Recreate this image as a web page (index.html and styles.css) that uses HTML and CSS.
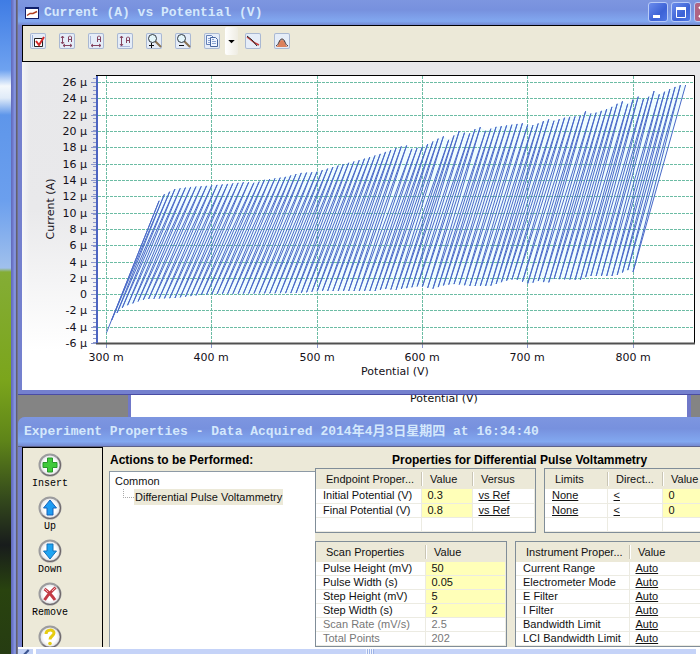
FILE: index.html
```html
<!DOCTYPE html>
<html lang="en">
<head>
<meta charset="utf-8">
<title>Current (A) vs Potential (V)</title>
<link rel="stylesheet" href="styles.css">
</head>
<body>
<div class="desktop">
<main class="workspace">
  <section class="window chart-window">
    <header class="titlebar">
      <svg class="title-icon" viewBox="0 0 14 12"><rect x=".5" y=".5" width="13" height="11" fill="#fff" stroke="#10206c"/><path d="M0 1h14" stroke="#10206c" stroke-width="2"/><path d="M2 8.500l3-2h3l4-2" fill="none" stroke="#b04020" stroke-width="1.500"/></svg>
      <h1>Current (A) vs Potential (V)</h1>
      <div class="caption-buttons">
        <button aria-label="Minimize"><svg viewBox="0 0 20 20"><path d="M5 14.500h7" stroke="#fff" stroke-width="3"/></svg></button>
        <button aria-label="Maximize"><svg viewBox="0 0 20 20"><path d="M5.500 6v9.500h9V6" fill="none" stroke="#fff"/><path d="M5 6.500h10" stroke="#fff" stroke-width="3"/></svg></button>
        <button class="close" aria-label="Close"><svg viewBox="0 0 20 20"><path d="M5 5l9 10M14 5l-9 10" stroke="#fff" stroke-width="2"/></svg></button>
      </div>
    </header>
    <div class="toolbar">
      <button aria-label="Options"><svg viewBox="0 0 16 16"><path d="M2.500 2v12" stroke="#9fb4dc"/><path d="M4.500 5.500h8v8h-8z" fill="#fff" stroke="#222"/><path d="M6 8l3 4 5-8" fill="none" stroke="#d42a2a" stroke-width="2"/></svg></button>
      <button aria-label="Autoscale both axes"><svg viewBox="0 0 16 16"><path d="M3.500 3v7M2 5l1.500-2L5 5M2 9l1.500 2L5 9M4 12.500h9M6 11l-2 1.500L6 14M11 11l2 1.500-2 1.500M9.500 9V4l1-1h1l1 1v5M9.500 6.500h3" fill="none" stroke="#85445f"/></svg></button>
      <button aria-label="Autoscale X axis"><svg viewBox="0 0 16 16"><path d="M2.500 3v8" stroke="#a9b6d8"/><path d="M3 12.500h10M5 11l-2 1.500L5 14M11 11l2 1.500-2 1.500M9.500 9V4l1-1h1l1 1v5M9.500 6.500h3" fill="none" stroke="#85445f"/></svg></button>
      <button aria-label="Autoscale Y axis"><svg viewBox="0 0 16 16"><path d="M3 13.500h10" stroke="#a9b6d8"/><path d="M4.500 3v10M3 5l1.500-2L6 5M3 11l1.500 2L6 11M9.500 10V5l1-1h1l1 1v5M9.500 7.500h3" fill="none" stroke="#85445f"/></svg></button>
      <button aria-label="Zoom in"><svg viewBox="0 0 16 16"><path d="M9 8l6 6" stroke="#8a7252" stroke-width="2"/><circle cx="6.500" cy="5.500" r="4" fill="#e4f6fa" stroke="#303840"/><path d="M3 12.500h5M5.500 10v5" stroke="#111"/></svg></button>
      <button aria-label="Zoom out"><svg viewBox="0 0 16 16"><path d="M9 8l6 6" stroke="#8a7252" stroke-width="2"/><circle cx="6.500" cy="5.500" r="4" fill="#e4f6fa" stroke="#303840"/><path d="M4 12.500h5" stroke="#111"/></svg></button>
      <div class="split">
        <button aria-label="Copy"><svg viewBox="0 0 16 16"><path d="M2.500 2.500h5l2 2v7h-7z" fill="#eef4ff" stroke="#6581b5"/><path d="M6.500 4.500h5l2 2v7h-7z" fill="#eef4ff" stroke="#46659f"/><path d="M8 8.500h4M8 10.500h4M8 6.500h2M4 5.500h2M4 7.500h2M4 9.500h2" stroke="#8aa4d2"/></svg></button>
        <button class="drop" aria-label="Copy options"><svg viewBox="0 0 12 28"><path d="M3 12h6l-3 3z" fill="#000"/></svg></button>
      </div>
      <button aria-label="Fit line"><svg viewBox="0 0 16 16"><path d="M2 4l4 3 4 3 4 2" fill="none" stroke="#d04040" stroke-width="1.500"/><path d="M2 3l5 4 5 6" fill="none" stroke="#222"/></svg></button>
      <button aria-label="Find peak"><svg viewBox="0 0 16 16"><path d="M2 14c3-1 3-7 6-7s3 6 6 7z" fill="#dc815c"/><path d="M2 13c3-1 3-7 6-7s3 6 6 7" fill="none" stroke="#3a2420"/></svg></button>
    </div>
    <div class="chart">
      <svg id="plot" viewBox="22 62 678 328" role="img" aria-label="Current against potential">
        <rect x="96" y="75" width="598" height="269" fill="#fff"/>
        <polygon id="band" fill="#effdff"/>
        <g id="grid"></g>
        <polyline id="trace" fill="none" stroke="#4a69c8"/>
        <g id="ticks"></g>
        <path d="M96 75.500h598.500v268" fill="none" stroke="#000"/>
        <path d="M96 343.500h599" stroke="#505050" stroke-width="2"/>
        <path d="M97 76v267" stroke="#4c64c0" stroke-width="2"/>
        <g id="labels"></g>
        <text x="395" y="375" text-anchor="middle">Potential (V)</text>
        <text transform="translate(54 209) rotate(-90)" text-anchor="middle">Current (A)</text>
      </svg>
    </div>
  </section>

  <div class="behind"><div class="behind-window"><span>Potential (V)</span></div></div>

  <section class="window props-window">
    <header class="titlebar">
      <h2>Experiment Properties - Data Acquired 2014年4月3日星期四 at 16:34:40</h2>
    </header>
    <div class="props-body">
      <nav class="actions">
        <button><svg viewBox="0 0 24 24"><use href="#disc"/><path d="M9.500 5h5v4.500H19v5h-4.500V19h-5v-4.500H5v-5h4.500z" fill="#3fca3a" stroke="#27962a"/></svg>Insert</button>
        <button><svg viewBox="0 0 24 24"><use href="#disc"/><path d="M12 4l6.500 8H15v7H9v-7H5.500z" fill="#1f9cf2" stroke="#1560b8"/></svg>Up</button>
        <button><svg viewBox="0 0 24 24"><use href="#disc"/><path d="M12 20l6.500-8H15V5H9v7H5.500z" fill="#1fa4f2" stroke="#1570b8"/></svg>Down</button>
        <button><svg viewBox="0 0 24 24"><use href="#disc"/><path d="M6.500 7c3 2 7 6 10.500 11M17.500 5.500C14 9 10 12 6.500 18" fill="none" stroke="#c33b45" stroke-width="3"/><path d="M7 7l3 3M17 6l-3 3" stroke="#efb0b0"/></svg>Remove</button>
        <button aria-label="Help"><svg viewBox="0 0 24 24"><use href="#disc"/><path d="M8 9c0-5 8-5 8-1 0 3-4 3-4 6.500" fill="none" stroke="#e6cc12" stroke-width="3"/><circle cx="12" cy="18.500" r="1.800" fill="#e6cc12"/></svg></button>
      </nav>
      <div class="steps">
        <h3>Actions to be Performed:</h3>
        <ul class="tree">
          <li>Common
            <ul><li><span>Differential Pulse Voltammetry</span></li></ul>
          </li>
        </ul>
      </div>
      <div class="details">
        <h3>Properties for Differential Pulse Voltammetry</h3>
        <div class="row">
          <div class="box endpoint"><table>
            <thead><tr><th>Endpoint Proper...</th><th>Value</th><th>Versus</th></tr></thead>
            <tbody>
              <tr><td>Initial Potential (V)</td><td class="edit">0.3</td><td><a href="#">vs Ref</a></td></tr>
              <tr><td>Final Potential (V)</td><td class="edit">0.8</td><td><a href="#">vs Ref</a></td></tr>
              <tr><td></td><td></td><td></td></tr>
            </tbody></table></div>
          <div class="box limits"><table>
            <thead><tr><th>Limits</th><th>Direct...</th><th>Value</th></tr></thead>
            <tbody>
              <tr><td><a href="#">None</a></td><td><a href="#">&lt;</a></td><td class="edit">0</td></tr>
              <tr><td><a href="#">None</a></td><td><a href="#">&lt;</a></td><td class="edit">0</td></tr>
              <tr><td></td><td></td><td></td></tr>
            </tbody></table></div>
        </div>
        <div class="row">
          <div class="box scan"><table>
            <thead><tr><th>Scan Properties</th><th>Value</th></tr></thead>
            <tbody>
              <tr><td>Pulse Height (mV)</td><td class="edit">50</td></tr>
              <tr><td>Pulse Width (s)</td><td class="edit">0.05</td></tr>
              <tr><td>Step Height (mV)</td><td class="edit">5</td></tr>
              <tr><td>Step Width (s)</td><td class="edit">2</td></tr>
              <tr class="muted"><td>Scan Rate (mV/s)</td><td>2.5</td></tr>
              <tr class="muted"><td>Total Points</td><td>202</td></tr>
            </tbody></table></div>
          <div class="box instrument"><table>
            <thead><tr><th>Instrument Proper...</th><th>Value</th></tr></thead>
            <tbody>
              <tr><td>Current Range</td><td><a href="#">Auto</a></td></tr>
              <tr><td>Electrometer Mode</td><td><a href="#">Auto</a></td></tr>
              <tr><td>E Filter</td><td><a href="#">Auto</a></td></tr>
              <tr><td>I Filter</td><td><a href="#">Auto</a></td></tr>
              <tr><td>Bandwidth Limit</td><td><a href="#">Auto</a></td></tr>
              <tr><td>LCI Bandwidth Limit</td><td><a href="#">Auto</a></td></tr>
            </tbody></table></div>
        </div>
      </div>
    </div>
  </section>
  <div class="scrollbar">
    <button aria-label="Scroll left"><svg viewBox="0 0 14 6"><path d="M10 1L5 6" stroke="#3d5590" stroke-width="2"/></svg></button>
    <div class="thumb"></div>
  </div>
</main>
</div>
<svg width="0" height="0" class="defs"><defs>
  <radialGradient id="shine"><stop offset=".6" stop-color="#fff"/><stop offset="1" stop-color="#dcdce0"/></radialGradient>
  <g id="disc"><circle cx="12" cy="12" r="10.500" fill="url(#shine)" stroke="#9c9c9e" stroke-width="2"/><path d="M19.500 4.500a10.500 10.500 0 0 1-15 15" fill="none" stroke="#6c6568"/></g>
</defs></svg>
<script src="plot.js"></script>
</body>
</html>
```
FILE: plot.js
```js
// Differential pulse trace: each step runs from the base level up to the pulse level.
const base = [[106,334],[111,321],[117,313],[122,308],[128,305],[134,303],[142,300],[148,299],[175,298],[200,295],[215,294],[300,293],[320,291],[375,291],[385,289],[395,290],[420,286],[432,289],[445,285],[455,284],[470,286],[490,286],[505,281],[515,279],[523,282],[529,284],[538,281],[548,283],[553,279],[580,280],[588,276],[615,276],[628,270],[633,272]];
const pulse = [[159,201],[163,195],[169,192],[175,189],[190,187],[205,186],[227,184],[246,182],[256,183],[263,180],[285,177],[300,173],[316,172],[340,165],[360,160],[380,154],[396,148],[406,145],[411,149],[422,147],[432,142],[443,136],[449,140],[459,131],[469,134],[479,126],[485,131],[495,127],[524,123],[530,126],[537,124],[548,119],[553,121],[567,117],[580,116],[585,111],[592,114],[610,108],[622,101],[628,104],[637,96],[643,99],[648,98],[653,90],[658,95],[670,89],[680,85],[686,85]];
const NS = "http://www.w3.org/2000/svg";
const $ = id => document.getElementById(id);

function level(points, x) {
  for (let i = 1; i < points.length; i++) {
    const [x0, y0] = points[i - 1], [x1, y1] = points[i];
    if (x <= x1) return y0 + (y1 - y0) * (x - x0) / (x1 - x0);
  }
  return points[points.length - 1][1];
}
function add(parent, tag, attrs, text) {
  const el = document.createElementNS(NS, tag);
  for (const k in attrs) el.setAttribute(k, attrs[k]);
  if (text) el.textContent = text;
  parent.append(el);
}

const perMilli = 1.053, trace = [], top_ = [], bottom = [];
for (let i = 0; i <= 100; i++) {
  const x0 = 106.5 + i * 5 * perMilli, x1 = x0 + 50 * perMilli;
  const lo = [x0, level(base, x0)], hi = [x1, level(pulse, x1)];
  trace.push(lo, hi);
  top_.push(hi);
  bottom.unshift(lo);
}
$("trace").setAttribute("points", trace.join(" "));
$("band").setAttribute("points", top_.concat(bottom).join(" "));

for (let v = 26; v >= -6; v -= 2) {
  const y = Math.round(82 + (26 - v) * 8.16);
  if (v > -6) add($("grid"), "path", { d: `M98 ${y + .5}H694` });
  add($("ticks"), "path", { d: `M91 ${y + .5}h5` });
  add($("labels"), "text", { x: 87, y: y + 4, "text-anchor": "end" }, v === 0 ? "0" : v + " µ");
}
for (let y = 78; y < 343; y += 4) add($("ticks"), "path", { d: `M93 ${y + .5}h3` });
for (let m = 300; m <= 800; m += 100) {
  const x = Math.round(106 + (m - 300) * perMilli);
  add($("grid"), "path", { d: `M${x + .5} 76V343` });
  add($("ticks"), "path", { d: `M${x + .5} 344v4` });
  add($("labels"), "text", { x, y: 361, "text-anchor": "middle" }, m + " m");
}
```
FILE: styles.css
```css
* { box-sizing: border-box; }
body { margin: 0; font: 11px/14px "Liberation Sans", Arial, sans-serif; color: #111; }
h1, h2, h3, ul { margin: 0; padding: 0; font-size: inherit; list-style: none; }
button { margin: 0; padding: 0; border: 0; background: none; color: inherit; font: inherit; }
svg { display: block; }
.defs { position: absolute; }

.desktop {
  height: 100vh;
  overflow: hidden;
  padding-left: 11px;
  background: linear-gradient(#3f7ce4 0, #6ea2f0 70px, #f4f8fc 86px, #e0ebf8 98px, #5e96ea 115px, #6b9fee 200px, #a0c0ec 268px, #84ad35 272px, #7ba51c 380px, #5f8519 440px, #33481c 500px, #181c1c 545px, #29430f 590px, #263c12 100%);
}
.workspace {
  display: flex;
  flex-direction: column;
  height: 100%;
  padding-left: 7px;
  background: linear-gradient(90deg, #6168b8 0, #6f7bcc 2px, #8a9ae4 4px, #7580cc 5px, #606070 5px, #606070 6px, #8587a8 7px, #848484 7px);
}
.window { overflow: hidden; background: #7480ce; padding-left: 4px; }
.titlebar {
  display: flex;
  align-items: center;
  gap: 5px;
  height: 25px;
  margin-left: -4px;
  padding-left: 7px;
  background: linear-gradient(#7d96e0, #7791de 40%, #82a8f0 85%, #7488d0);
  color: #d4e8fc;
  font: bold 13px/16px "Liberation Mono", "Noto Sans CJK SC", monospace;
  white-space: nowrap;
}
.title-icon { width: 14px; height: 12px; }
.caption-buttons { display: flex; gap: 3px; margin: 0 -14px 2px auto; }
.caption-buttons button { width: 20px; height: 20px; border: 1px solid #b8cbf8; border-radius: 3px; background: linear-gradient(135deg, #6b8cec, #3c62d6 60%, #4f78e6); }
.caption-buttons .close { background: #b06484; }
.caption-buttons svg { margin: -1px; width: 20px; height: 20px; }

.toolbar {
  display: flex;
  align-items: center;
  gap: 13px;
  height: 37px;
  padding: 0 7px 5px;
  border: solid #000;
  border-width: 1px 0 1px 1px;
  background: #ece9d8;
}
.toolbar button { width: 16px; height: 16px; border-radius: 2px; background: #e5edf8; box-shadow: 0 0 0 1px #a9b8d2 inset; }
.split { display: flex; align-items: center; gap: 5px; height: 28px; margin-right: -6px; }
.toolbar .drop { width: 13px; height: 28px; background: linear-gradient(90deg, #fff, #eeece2); box-shadow: none; }

.chart { background: linear-gradient(90deg, #fff8, #fff0 8px), linear-gradient(#e8e8ea 0, #e9e9eb 45%, #fff 88%); }
.chart svg { width: 100%; }
.chart text { font: 11px "DejaVu Sans", Verdana, sans-serif; fill: #141018; }
#grid { fill: none; stroke: #6cbca4; stroke-dasharray: 3 1; }
#ticks { stroke: #8c98cc; }
.chart-window { flex: none; border-bottom: 1px solid #4a4ca4; padding-bottom: 4px; }

.behind { flex: none; height: 22px; padding: 0 9px 0 110px; }
.behind-window { height: 100%; overflow: hidden; border: solid #7078c8; border-width: 0 4px 0 3px; background: #fff; text-align: center; font: 11px/14px "DejaVu Sans", Verdana, sans-serif; }
.behind-window span { display: block; margin: -3px 0 0 70px; }

.props-window { flex: 1; min-height: 0; display: flex; flex-direction: column; border-radius: 7px 0 0 0; }
.props-window .titlebar { flex: none; height: 30px; padding-left: 6px; border-bottom: 1px solid #5b628a; }
.props-body { flex: 1; min-height: 0; display: flex; background: #ece9d8; }
.actions { flex: none; width: 81px; padding-top: 5px; border: 1px solid #000; border-bottom: 0; overflow: hidden; }
.actions button { display: flex; flex-direction: column; align-items: center; justify-content: flex-start; width: 54px; height: 43px; font: 10px/13px "Liberation Mono", monospace; color: #000; }
.actions svg { flex: none; width: 24px; height: 24px; }
.steps { flex: none; width: 212px; display: flex; flex-direction: column; padding: 5px 0 0 6px; }
h3 { font-weight: bold; font-size: 12px; line-height: 16px; white-space: nowrap; color: #000; }
.steps h3 { padding-left: 1px; }
.tree { flex: 1; margin-top: 3px; padding: 1px 5px; border: solid #8d9aa5; border-width: 1px 0 0 1px; background: #fff; line-height: 16px; white-space: nowrap; }
.tree ul { display: flex; padding-left: 8px; }
.tree ul::before { content: ""; width: 10px; height: 8px; border: dotted #aaa; border-width: 0 0 1px 1px; }
.tree span { display: block; padding: 0 1px; background: #ece9d8; }
.details { flex: 1; min-width: 0; padding-top: 5px; }
.details h3 { padding-left: 77px; }
.row { display: flex; gap: 8px; margin-right: -48px; }
.row + .row { margin-top: 8px; }
.box { flex: none; border: 1px solid #808d98; background: #fff; }
.endpoint { width: 221px; }
.scan { width: 192px; }
.limits, .instrument { flex: 1; }
table { width: 100%; border-collapse: collapse; table-layout: fixed; }
th { height: 20px; padding: 0 0 0 9px; background: linear-gradient(90deg, #c9c5b4 1px, #fff 1px, #fff 2px, #0000 2px) left / 100% 14px no-repeat, #ece9d8; text-align: left; font-weight: normal; white-space: nowrap; }
th:first-child { padding-left: 10px; background: #ece9d8; }
td { height: 14px; padding: 0 0 0 6px; border: solid #ecebe2; border-width: 0 1px 1px 0; line-height: 13px; white-space: nowrap; }
td:first-child { padding-left: 7px; }
.edit { background: #ffffb8; }
.muted { color: #777; }
a { color: inherit; }
.endpoint th:nth-child(1) { width: 105px; }
.endpoint th:nth-child(2) { width: 51px; }
.limits th:nth-child(1) { width: 62px; }
.limits th:nth-child(2) { width: 55px; }
.scan th:nth-child(1) { width: 109px; }
.instrument th:nth-child(1) { width: 113px; }

.scrollbar { flex: none; display: flex; gap: 3px; height: 7px; border-top: 2px solid #fff; background: #fff; }
.scrollbar button { width: 15px; background: #c3d2f6; }
.thumb { flex: 1; margin-right: 4px; background: repeating-linear-gradient(90deg, #eef3ff 0 1px, #9fb4e6 1px 2px) 330px 0 / 8px 100% no-repeat, #c5d3f8; }
```
